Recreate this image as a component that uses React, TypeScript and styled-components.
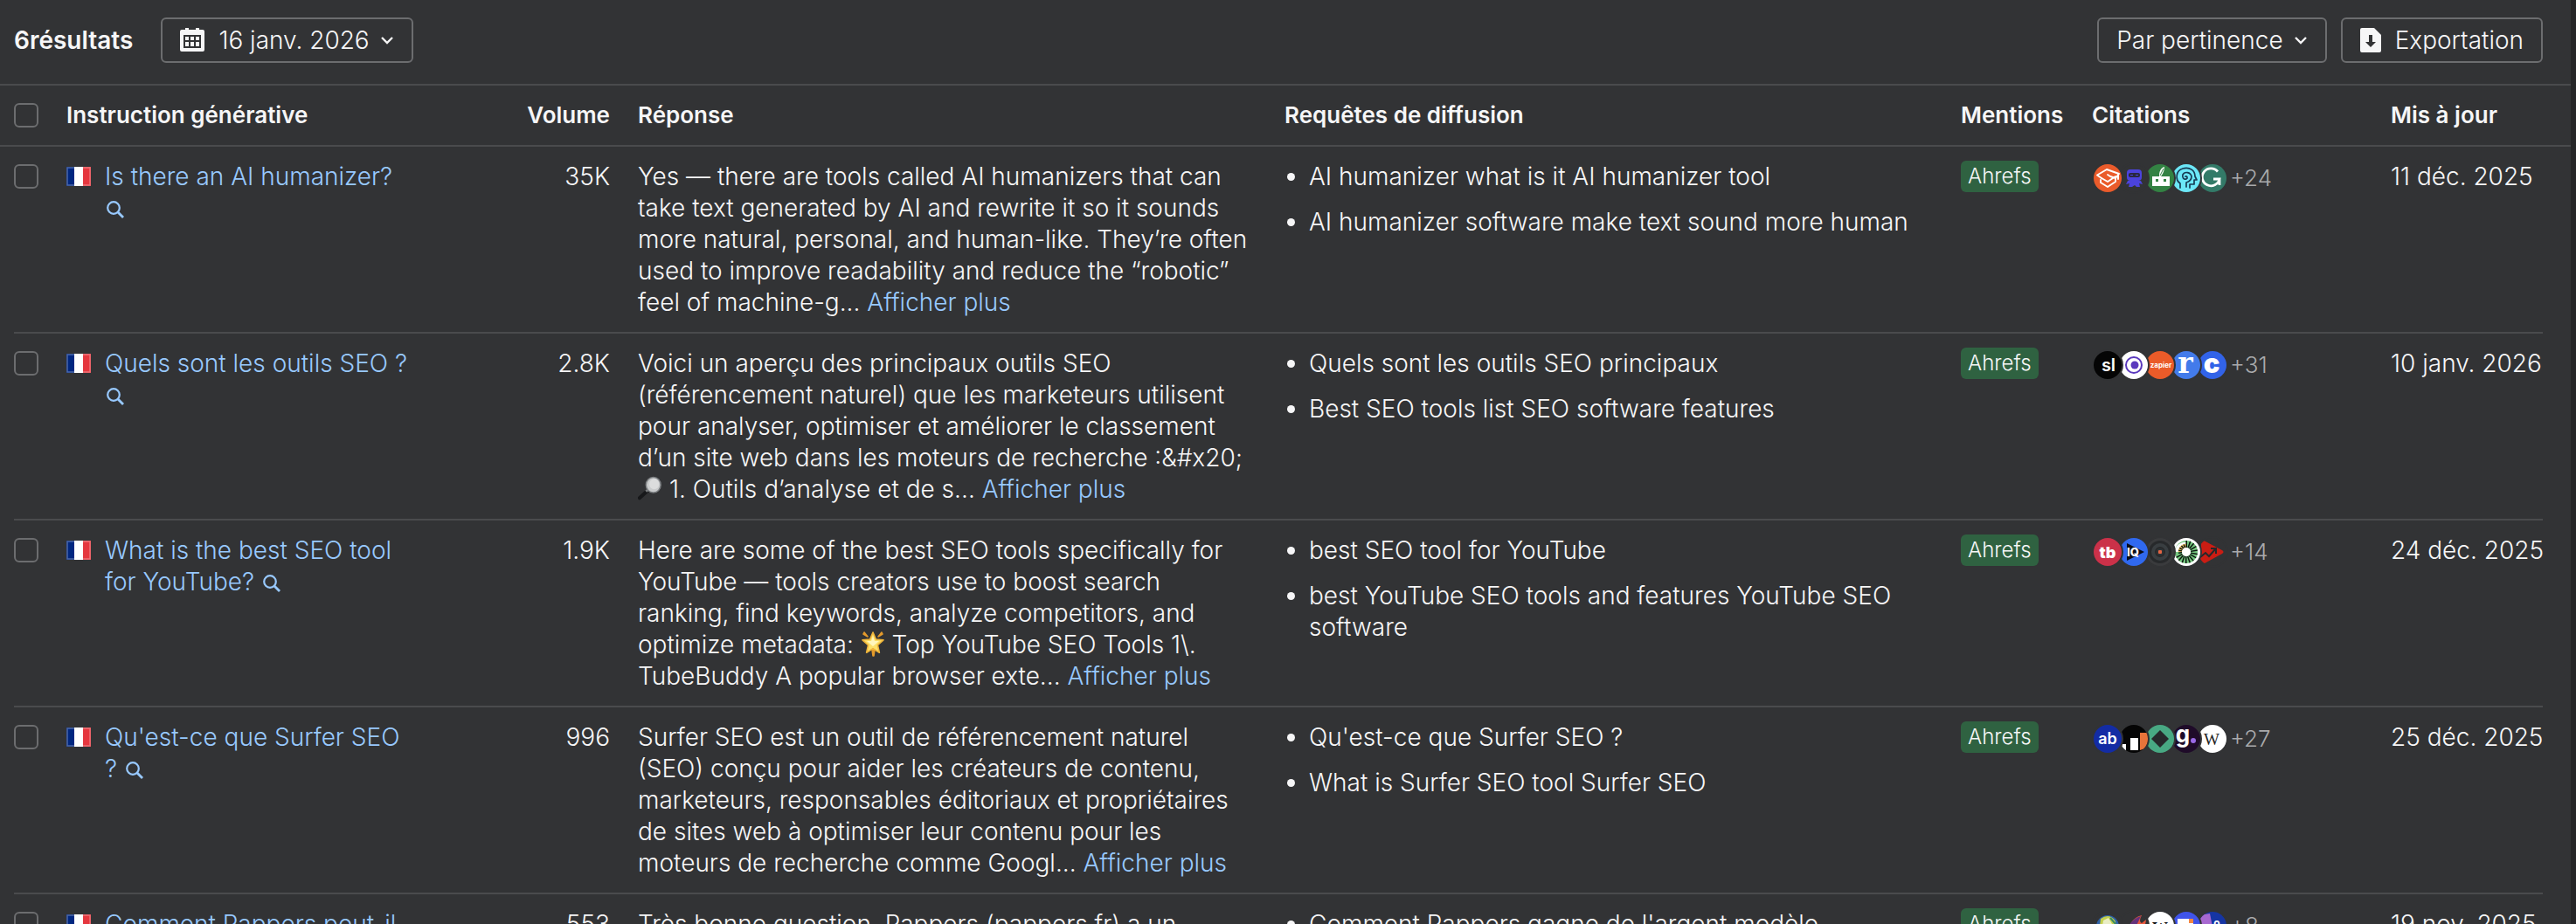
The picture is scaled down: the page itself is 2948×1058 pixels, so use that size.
import React from "react";
import styled, { createGlobalStyle } from "styled-components";

const color = {
  page: "#252628",
  panel: "#323335",
  line: "#4a4b4d",
  control: "#6c6d6f",
  text: "#f6f6f7",
  muted: "#a9aaac",
  link: "#98c9ff",
  badge: "#2f6241",
};

const GlobalStyle = createGlobalStyle`
  *, *::before, *::after { box-sizing: border-box; }
  body {
    margin: 0;
    background: ${color.page};
    color: ${color.text};
    font-family: Inter, "Noto Sans", sans-serif;
    font-size: 28px;
    font-weight: 300;
    line-height: 36px;
  }
`;

const Page = styled.div`
  height: 100vh;
  overflow: hidden;
  padding-right: 6px;
`;

const Panel = styled.main`
  min-height: 100%;
  background: ${color.panel};
`;

const Toolbar = styled.header`
  display: flex;
  align-items: center;
  justify-content: space-between;
  padding: 20px 32px 24px 16px;
  border-bottom: 2px solid ${color.line};
`;

const ToolbarGroup = styled.div<{ $gap: number }>`
  display: flex;
  align-items: center;
  gap: ${(p) => p.$gap}px;
`;

const ResultCount = styled.strong`
  font-weight: 600;
`;

const Control = styled.button`
  display: flex;
  align-items: center;
  height: 52px;
  padding: 0 20px;
  border: 2px solid ${color.control};
  border-radius: 6px;
  background: transparent;
  color: inherit;
  font: inherit;
  white-space: nowrap;
  cursor: pointer;
`;

const ControlIcon = styled.span`
  display: flex;
  margin-right: 16px;
`;

const ChevronBox = styled.span`
  display: flex;
  margin-left: 12px;
  pointer-events: none;
`;

const SortSelect = styled.select`
  appearance: none;
  field-sizing: content;
  padding: 0;
  border: 0;
  outline: 0;
  background: transparent;
  color: inherit;
  font: inherit;
`;

const Table = styled.table`
  width: 100%;
  table-layout: fixed;
  border-spacing: 0;
`;

const Col = styled.col<{ $width?: number }>`
  width: ${(p) => (p.$width ? `${p.$width}px` : "auto")};
`;

const HeadCell = styled.th<{ $align?: "left" | "right" }>`
  padding: 16px;
  border-bottom: 2px solid ${color.line};
  font-size: 26px;
  font-weight: 600;
  line-height: 36px;
  text-align: ${(p) => p.$align ?? "left"};
  white-space: nowrap;
`;

const Row = styled.tr`
  background: linear-gradient(${color.line}, ${color.line}) no-repeat 16px 100% / calc(100% - 48px) 2px;
`;

const Cell = styled.td<{ $align?: "left" | "right" }>`
  padding: 16px 16px 18px;
  vertical-align: top;
  text-align: ${(p) => p.$align ?? "left"};
`;

const Tick = styled.input`
  appearance: none;
  display: block;
  width: 28px;
  height: 28px;
  margin: 4px 0;
  border: 2px solid ${color.control};
  border-radius: 6px;
  cursor: pointer;
  &:checked { background: ${color.link}; }
`;

const Prompt = styled.div`
  display: flex;
  align-items: flex-start;
  gap: 16px;
`;

const FlagBox = styled.span`
  display: flex;
  align-items: center;
  flex: none;
  height: 36px;
`;

const TextLink = styled.a`
  color: ${color.link};
  text-decoration: none;
`;

const MoreButton = styled.button`
  padding: 0;
  border: 0;
  background: none;
  color: ${color.link};
  font: inherit;
  cursor: pointer;
`;

const Queries = styled.ul`
  display: flex;
  flex-direction: column;
  gap: 16px;
  margin: 0;
  padding-left: 28px;
`;

const Badge = styled.span`
  display: block;
  width: fit-content;
  height: 36px;
  padding: 0 8px;
  border-radius: 6px;
  background: ${color.badge};
  font-size: 24px;
`;

const Citations = styled.div`
  display: flex;
  align-items: center;
  height: 36px;
  margin-top: 2px;
  padding-left: 2px;
  color: ${color.muted};
  font-size: 26px;
`;

const Favicon = styled.span<{ $level: number }>`
  position: relative;
  z-index: ${(p) => p.$level};
  display: flex;
  flex: none;
  width: 32px;
  height: 32px;
  margin-right: -2px;
  border-radius: 50%;
  overflow: hidden;
  background: ${color.panel};
  box-shadow: 0 0 0 2px ${color.panel};
`;

const MoreCount = styled.span`
  padding-left: 6px;
`;

const DateText = styled.time`
  white-space: nowrap;
`;

const InlineSvg = styled.svg<{ $drop: number }>`
  display: inline-block;
  vertical-align: -${(p) => p.$drop}px;
`;

/* ---------- icons ---------- */

const Chevron = () => (
  <ChevronBox aria-hidden>
    <svg width="16" height="12" viewBox="0 0 16 12" fill="none">
      <path d="M2 3l6 6 6-6" stroke="currentColor" strokeWidth="2.4" />
    </svg>
  </ChevronBox>
);

const CalendarIcon = () => (
  <svg width="28" height="28" viewBox="0 0 28 28" aria-hidden>
    <path
      fill="currentColor"
      fillRule="evenodd"
      d="M6 0h4v2h8V0h4v2h4a2 2 0 0 1 2 2v21a2 2 0 0 1-2 2H2a2 2 0 0 1-2-2V4a2 2 0 0 1 2-2h4zM4 8v15h20V8z"
    />
    <path fill="currentColor" d="M6 10h4v4H6zM12 10h4v4h-4zM18 10h4v4h-4zM6 16h4v5H6zM12 16h4v5h-4zM18 16h4v5h-4z" />
  </svg>
);

const ExportIcon = () => (
  <svg width="24" height="28" viewBox="0 0 24 28" aria-hidden>
    <path
      fill="currentColor"
      fillRule="evenodd"
      d="M2 0h14l8 8v18a2 2 0 0 1-2 2H2a2 2 0 0 1-2-2V2a2 2 0 0 1 2-2zM10 8v8H6l6 6 6-6h-4V8z"
    />
  </svg>
);

const SearchIcon = () => (
  <InlineSvg $drop={2} width="22" height="20" viewBox="0 0 22 20" fill="none" stroke="currentColor" strokeWidth="2.2" aria-hidden>
    <circle cx="10" cy="8" r="6.800" />
    <path d="M15 13l6 6" strokeWidth="2.8" />
  </InlineSvg>
);

const FrenchFlag = () => (
  <svg width="28" height="22" viewBox="0 0 28 22" role="img" aria-label="France">
    <path fill="#002780" d="M0 0h9v22H0z" />
    <path fill="#fff" d="M9 0h10v22H9z" />
    <path fill="#e5373f" d="M19 0h9v22h-9z" />
    <path d="M1 1h26v20H1z" fill="none" stroke="#fff" strokeOpacity=".3" strokeWidth="1.5" />
  </svg>
);

const GlassEmoji = () => (
  <InlineSvg $drop={3} width="28" height="28" viewBox="0 0 30 28" role="img" aria-label="loupe">
    <path d="M12 17L2 26" stroke="#17181a" strokeWidth="4.5" strokeLinecap="round" />
    <path d="M13 15l-3 3" stroke="#7d8082" strokeWidth="3" />
    <ellipse cx="19" cy="10" rx="9" ry="9.4" fill="#c9cbcc" stroke="#7c7f82" strokeWidth="1.6" />
    <ellipse cx="20" cy="9" rx="6" ry="6.4" fill="#dcdddd" />
  </InlineSvg>
);

const StarEmoji = () => (
  <InlineSvg $drop={4} width="28" height="30" viewBox="0 0 28 30" role="img" aria-label="étoile brillante">
    <path d="M4 2l4 5-5-3zM24 2l-4 5 5-3zM13 22h3l-1 7h-1z" fill="#e39a2c" stroke="#e39a2c" strokeWidth="1.6" strokeLinejoin="round" />
    <path
      d="M14 2l3.4 8 8.6.8-6.6 5.8 2 8.6-7.4-4.6-7.4 4.6 2-8.6L2 10.8l8.6-.8z"
      fill="#fbe06a"
      stroke="#f0b53a"
      strokeWidth="1.6"
      strokeLinejoin="round"
    />
    <path d="M14 6l2 6h5l-7 6-7-6h5z" fill="#fff6bd" />
  </InlineSvg>
);

/* ---------- site marks ---------- */

type MarkProps = { bg?: string; children?: React.ReactNode };
const Mark = ({ bg, children }: MarkProps) => (
  <svg width="32" height="32" viewBox="0 0 32 32" aria-hidden>
    {bg && <path fill={bg} d="M0 0h32v32H0z" />}
    {children}
  </svg>
);

type GlyphProps = { x?: number; y: number; size: number; fill?: string; weight?: number; family?: string; children: string };
const Glyph = ({ x = 16, y, size, fill = "#fff", weight = 700, family = "Inter, sans-serif", children }: GlyphProps) => (
  <text x={x} y={y} textAnchor="middle" fontSize={size} fontWeight={weight} fontFamily={family} fill={fill}>
    {children}
  </text>
);

const serif = '"Liberation Serif", serif';
const rays = Array.from({ length: 18 }, (_, i) => i * 20);

const marks: Record<string, React.ReactNode> = {
  scholar: (
    <Mark bg="#ea5b2b">
      <g fill="none" stroke="#fff" strokeWidth="1.9" strokeLinejoin="round" strokeLinecap="round">
        <path d="M9 16l-5-3.500L15 6l14 5-4 5-6-2-3-2" />
        <path d="M9 16l7 4 9-6v6l-9 6-8-5v-3" />
        <path d="M28 12v5" />
      </g>
    </Mark>
  ),
  robot: (
    <Mark>
      <rect x="8" y="6" width="17" height="13" rx="4" fill="#4b43dc" />
      <rect x="10" y="10" width="13" height="5" rx="2" fill="#28283f" />
      <path fill="#4b43dc" d="M12 12h3v1h-3zM18 12h3v1h-3zM9 19h15l2 4-4-1 1 4h-4l-2-2-3 2h-4l1-4-4 1z" />
    </Mark>
  ),
  quill: (
    <Mark bg="#338243">
      <path fill="#fff" d="M7 14h20v11H7zM15 14c0-5 1-9 6-11 0 5-2 8-4 11z" />
      <path stroke="#338243" d="M16 13l4-8" />
      <path fill="#338243" d="M11 17h3v3h-3zM20 17h3v3h-3z" />
    </Mark>
  ),
  head: (
    <Mark bg="#6ce7f7">
      <g fill="none" stroke="#173b53" strokeWidth="1.7" strokeLinecap="round" strokeLinejoin="round">
        <path d="M9 27v-5C3 18 4 7 12 5c8-2 14 2 14 9l2 4h-3v5h-5v4" />
        <path d="M15 14c2-1 3 2 1 3-3 1-5-2-4-5 2-4 9-3 10 2 0 4-3 6-6 7v5" />
      </g>
    </Mark>
  ),
  grammarly: (
    <Mark bg="#337a68">
      <path d="M22 8.500a10 10 0 1 0 2 8.500h-7M24 16v8" fill="none" stroke="#fff" strokeWidth="2.8" />
    </Mark>
  ),
  sl: (
    <Mark bg="#050505">
      <Glyph x={17} y={23} size={20} weight={600}>sl</Glyph>
    </Mark>
  ),
  eye: (
    <Mark bg="#fff">
      <circle cx="16" cy="16" r="9" fill="none" stroke="#5a39bd" strokeWidth="2" />
      <circle cx="17" cy="16" r="4.500" fill="#5a39bd" />
    </Mark>
  ),
  zapier: (
    <Mark bg="#ea5b29">
      <Glyph x={17} y={19} size={8}>zapier</Glyph>
    </Mark>
  ),
  r: (
    <Mark bg="#437bea">
      <Glyph x={15} y={25} size={33} family={'"DejaVu Serif", serif'}>r</Glyph>
    </Mark>
  ),
  c: (
    <Mark bg="#3263e8">
      <Glyph x={15} y={25} size={31} weight={900}>c</Glyph>
    </Mark>
  ),
  tb: (
    <Mark bg="#cb3149">
      <Glyph x={16} y={23} size={18} weight={900}>tb</Glyph>
    </Mark>
  ),
  iq: (
    <Mark bg="#3069ef">
      <path d="M8 6l20 10L8 26z" fill="#0a0d17" />
      <Glyph x={15} y={21} size={13} weight={800}>IQ</Glyph>
    </Mark>
  ),
  lens: (
    <Mark bg="#3a3b3d">
      <circle cx="16" cy="16" r="13" fill="#27292b" />
      <circle cx="16" cy="16" r="8" fill="none" stroke="#393e41" strokeWidth="4" />
      <circle cx="16" cy="16" r="4" fill="#303335" />
      <rect x="14" y="14" width="4" height="4" rx="1" fill="#e56543" />
    </Mark>
  ),
  burst: (
    <Mark bg="#fff">
      <circle cx="16" cy="16" r="9" fill="none" stroke="#74c67e" strokeWidth="8" />
      <path d="M16 5A11 11 0 0 0 3 16h10z" fill="#fff" />
      <path d="M16 9a7 7 0 0 0-7 7" fill="none" stroke="#f6c76b" strokeWidth="5" />
      {rays.map((a) => (
        <path key={a} d={a > 250 ? "M15.500 11v-4h1.500v4z" : "M15.500 11v-8h1.500v8z"} fill="#0b160f" transform={`rotate(${a} 16 16)`} />
      ))}
      <circle cx="16" cy="16" r="5" fill="#fff" />
    </Mark>
  ),
  trend: (
    <Mark>
      <path d="M3 4q2-2 5 0l19 10q3 2 0 4L7 29q-3 2-4-2l-3-2 3-5z" fill="#ca1d14" />
      <path d="M2 22l6-5 4 4 7-8M14 12l6 0v6" fill="none" stroke="#26282a" strokeWidth="2" />
    </Mark>
  ),
  ab: (
    <Mark bg="#132ca4">
      <Glyph x={16} y={22} size={18} weight={600}>ab</Glyph>
    </Mark>
  ),
  bars: (
    <Mark bg="#050505">
      <path d="M3 22h4v10H0zM12 15h9v14h-9z" fill="#fff" />
      <path d="M23 9h9v17l-9 3z" fill="#e8743a" />
    </Mark>
  ),
  diamond: (
    <Mark bg="#48a983">
      <path d="M16 6l10 10-10 10L6 16z" fill="#26292b" />
    </Mark>
  ),
  g: (
    <Mark bg="#1f0b29">
      <Glyph x={12} y={20} size={26} weight={700}>g</Glyph>
      <circle cx="24" cy="18" r="3" fill="#9a6ae6" />
    </Mark>
  ),
  wiki: (
    <Mark bg="#fff">
      <Glyph x={15} y={23} size={19} weight={400} fill="#222" family={serif}>W</Glyph>
    </Mark>
  ),
  globe: (
    <Mark>
      <circle cx="16" cy="17" r="13" fill="#2f62a8" />
      <path d="M8 8q10-7 17 3l1 12-9 6-2-9-8-4z" fill="#c3cf4e" />
      <path d="M11 10l6-3 4 7-5 5-6-3z" fill="#e9edc4" />
      <path d="M19 7l6 7-2 10" stroke="#3a8a62" strokeWidth="2" fill="none" />
    </Mark>
  ),
  flame: (
    <Mark>
      <path d="M8 22Q14 6 25 4q-4 7 0 9l5-4q-2 16-12 20z" fill="#e8563c" />
      <path d="M7 22Q13 8 24 5l-6 13z" fill="#64317b" />
    </Mark>
  ),
  word: (
    <Mark bg="#fff">
      <Glyph x={16} y={25} size={18} weight={700} fill="#111" family={serif}>W</Glyph>
    </Mark>
  ),
  flag: (
    <Mark bg="#4054ea">
      <path d="M6 8h13v5h5v6h-5v6H6z" fill="#fff" />
      <path d="M19 8h5v5h-5zM19 19h5v5h-5z" fill="#f58742" />
      <path d="M6 14h8v4H6z" fill="#4054ea" />
    </Mark>
  ),
  duo: (
    <Mark bg="#1535a4">
      <path d="M0 4l13-2 6 30H0z" fill="#a768d0" />
      <Glyph x={21} y={17} size={12}>o</Glyph>
    </Mark>
  ),
};

/* ---------- data ---------- */

type Result = {
  prompt: string;
  volume: string;
  answer: React.ReactNode;
  queries: string[];
  sites: string[];
  more: string;
  updated: string;
};

const results: Result[] = [
  {
    prompt: "Is there an AI humanizer?",
    volume: "35K",
    answer:
      "Yes — there are tools called AI humanizers that can take text generated by AI and rewrite it so it sounds more natural, personal, and human-like. They’re often used to improve readability and reduce the “robotic” feel of machine-g...",
    queries: ["AI humanizer what is it AI humanizer tool", "AI humanizer software make text sound more human"],
    sites: ["scholar", "robot", "quill", "head", "grammarly"],
    more: "+24",
    updated: "11 déc. 2025",
  },
  {
    prompt: "Quels sont les outils SEO ?",
    volume: "2.8K",
    answer: (
      <>
        Voici un aperçu des principaux outils SEO (référencement naturel) que les marketeurs utilisent pour analyser,
        optimiser et améliorer le classement d’un site web dans les moteurs de recherche {":&#x20;"} <GlassEmoji /> 1.
        Outils d’analyse et de s...
      </>
    ),
    queries: ["Quels sont les outils SEO principaux", "Best SEO tools list SEO software features"],
    sites: ["sl", "eye", "zapier", "r", "c"],
    more: "+31",
    updated: "10 janv. 2026",
  },
  {
    prompt: "What is the best SEO tool for YouTube?",
    volume: "1.9K",
    answer: (
      <>
        Here are some of the best SEO tools specifically for YouTube — tools creators use to boost search ranking, find
        keywords, analyze competitors, and optimize metadata: <StarEmoji /> Top YouTube SEO Tools 1\. TubeBuddy A
        popular browser exte...
      </>
    ),
    queries: ["best SEO tool for YouTube", "best YouTube SEO tools and features YouTube SEO software"],
    sites: ["tb", "iq", "lens", "burst", "trend"],
    more: "+14",
    updated: "24 déc. 2025",
  },
  {
    prompt: "Qu'est-ce que Surfer SEO ?",
    volume: "996",
    answer:
      "Surfer SEO est un outil de référencement naturel (SEO) conçu pour aider les créateurs de contenu, marketeurs, responsables éditoriaux et propriétaires de sites web à optimiser leur contenu pour les moteurs de recherche comme Googl...",
    queries: ["Qu'est-ce que Surfer SEO ?", "What is Surfer SEO tool Surfer SEO"],
    sites: ["ab", "bars", "diamond", "g", "wiki"],
    more: "+27",
    updated: "25 déc. 2025",
  },
  {
    prompt: "Comment Pappers peut-il",
    volume: "553",
    answer: "Très bonne question. Pappers (pappers.fr) a un",
    queries: ["Comment Pappers gagne de l'argent modèle"],
    sites: ["globe", "flame", "word", "flag", "duo"],
    more: "+8",
    updated: "19 nov. 2025",
  },
];

const ResultRow = ({ item }: { item: Result }) => (
  <Row>
    <Cell>
      <Tick type="checkbox" aria-label={item.prompt} />
    </Cell>
    <Cell>
      <Prompt>
        <FlagBox>
          <FrenchFlag />
        </FlagBox>
        <TextLink href="#">
          {item.prompt} <SearchIcon />
        </TextLink>
      </Prompt>
    </Cell>
    <Cell $align="right">{item.volume}</Cell>
    <Cell>
      {item.answer} <MoreButton type="button">Afficher plus</MoreButton>
    </Cell>
    <Cell>
      <Queries>
        {item.queries.map((q) => (
          <li key={q}>{q}</li>
        ))}
      </Queries>
    </Cell>
    <Cell>
      <Badge>Ahrefs</Badge>
    </Cell>
    <Cell>
      <Citations>
        {item.sites.map((s, i) => (
          <Favicon key={s} $level={item.sites.length - i}>
            {marks[s]}
          </Favicon>
        ))}
        <MoreCount>{item.more}</MoreCount>
      </Citations>
    </Cell>
    <Cell>
      <DateText>{item.updated}</DateText>
    </Cell>
  </Row>
);

export default function App() {
  return (
    <Page>
      <GlobalStyle />
      <Panel>
        <Toolbar>
          <ToolbarGroup $gap={32}>
            <ResultCount>6résultats</ResultCount>
            <Control type="button">
              <ControlIcon>
                <CalendarIcon />
              </ControlIcon>
              16 janv. 2026
              <Chevron />
            </Control>
          </ToolbarGroup>
          <ToolbarGroup $gap={16}>
            <Control as="label">
              <SortSelect aria-label="Trier">
                <option>Par pertinence</option>
              </SortSelect>
              <Chevron />
            </Control>
            <Control type="button">
              <ControlIcon>
                <ExportIcon />
              </ControlIcon>
              Exportation
            </Control>
          </ToolbarGroup>
        </Toolbar>
        <Table>
          <colgroup>
            <Col $width={60} />
            <Col $width={428} />
            <Col $width={226} />
            <Col $width={740} />
            <Col />
            <Col $width={150} />
            <Col $width={342} />
            <Col $width={222} />
          </colgroup>
          <thead>
            <tr>
              <HeadCell>
                <Tick type="checkbox" aria-label="Tout sélectionner" />
              </HeadCell>
              <HeadCell>Instruction générative</HeadCell>
              <HeadCell $align="right">Volume</HeadCell>
              <HeadCell>Réponse</HeadCell>
              <HeadCell>Requêtes de diffusion</HeadCell>
              <HeadCell>Mentions</HeadCell>
              <HeadCell>Citations</HeadCell>
              <HeadCell>Mis à jour</HeadCell>
            </tr>
          </thead>
          <tbody>
            {results.map((item) => (
              <ResultRow key={item.prompt} item={item} />
            ))}
          </tbody>
        </Table>
      </Panel>
    </Page>
  );
}
